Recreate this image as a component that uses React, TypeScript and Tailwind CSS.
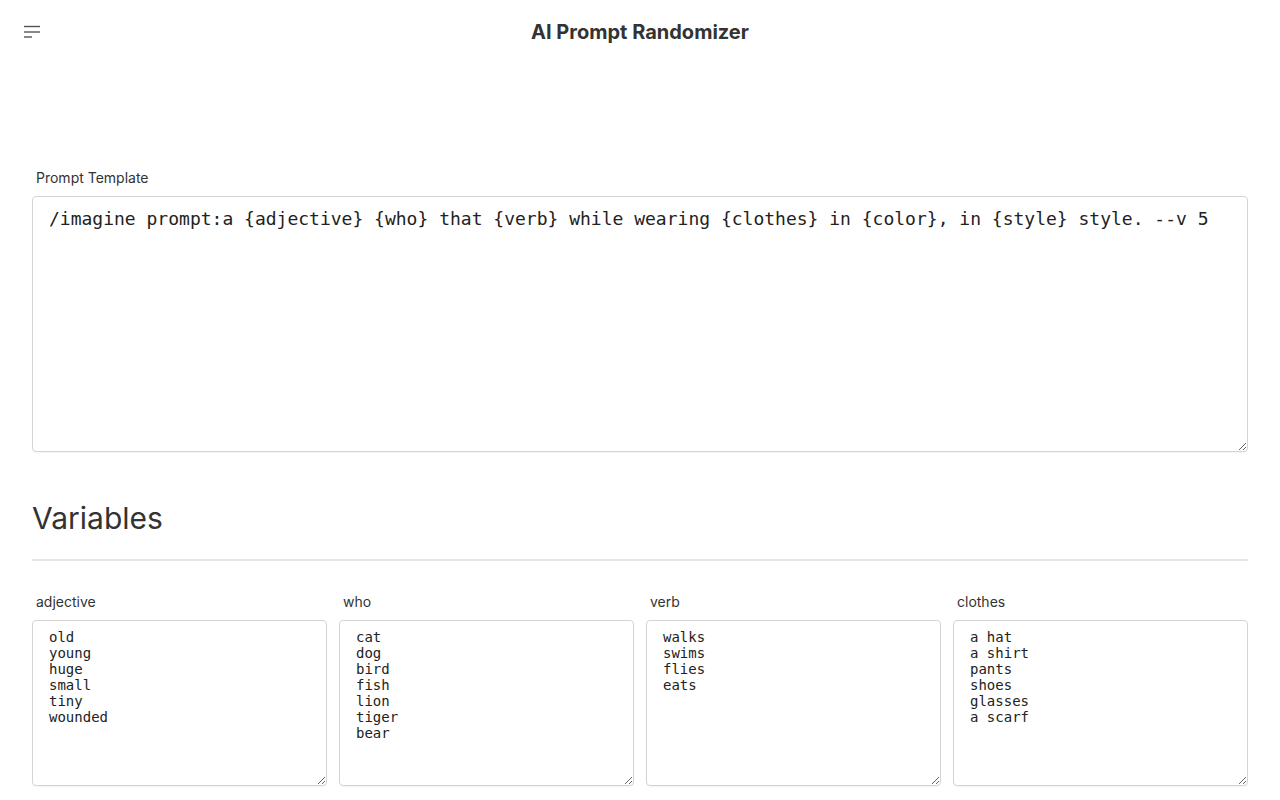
import { useState } from "react";

const mono = "font-['DejaVu_Sans_Mono',monospace]";

const initialVars: { name: string; values: string }[] = [
  { name: "adjective", values: "old\nyoung\nhuge\nsmall\ntiny\nwounded" },
  { name: "who", values: "cat\ndog\nbird\nfish\nlion\ntiger\nbear" },
  { name: "verb", values: "walks\nswims\nflies\neats" },
  { name: "clothes", values: "a hat\na shirt\npants\nshoes\nglasses\na scarf" },
];

function MenuIcon() {
  return (
    <svg width="16" height="14" viewBox="0 0 16 14" fill="none" stroke="#555" strokeWidth="1.4">
      <line x1="0" y1="1.5" x2="16" y2="1.5" />
      <line x1="0" y1="7" x2="16" y2="7" />
      <line x1="0" y1="12" x2="8" y2="12" />
    </svg>
  );
}

export default function App() {
  const [template, setTemplate] = useState(
    "/imagine prompt:a {adjective} {who} that {verb} while wearing {clothes} in {color}, in {style} style. --v 5"
  );
  const [vars, setVars] = useState(initialVars);

  return (
    <div className="min-h-screen bg-white text-[#333] font-['Inter',sans-serif]">
      {/* Top bar */}
      <header className="relative h-16 flex items-center justify-center">
        <button className="absolute left-6 top-[25px] p-0">
          <MenuIcon />
        </button>
        <h1 className="text-[20px] font-bold text-[#333]">AI Prompt Randomizer</h1>
      </header>

      <main className="px-8 pt-[104px]">
        <label className="block pl-1 text-sm leading-5 mb-2">Prompt Template</label>
        <textarea
          value={template}
          onChange={(e) => setTemplate(e.target.value)}
          className={`${mono} block w-full h-[256px] text-[18px] leading-[21px] pt-[11px] px-4 border border-[#d4d4d4] rounded outline-none text-[#222] shadow-[0_1px_1px_rgba(0,0,0,0.04)]`}
        />

        <h2 className="mt-[46px] text-[30px] leading-10 font-normal">Variables</h2>
        <hr className="mt-[21px] border-0 h-[2px] bg-[#e6e6e6]" />

        <div className="mt-[31px] grid grid-cols-4 gap-3">
          {vars.map((v, i) => (
            <div key={v.name}>
              <label className="block pl-1 text-sm leading-5 mb-2">{v.name}</label>
              <textarea
                value={v.values}
                onChange={(e) =>
                  setVars(vars.map((x, j) => (j === i ? { ...x, values: e.target.value } : x)))
                }
                className={`${mono} block w-full h-[166px] text-sm leading-4 pt-2 px-4 border border-[#d4d4d4] rounded outline-none text-[#222] shadow-[0_1px_1px_rgba(0,0,0,0.04)]`}
              />
            </div>
          ))}
        </div>
      </main>
    </div>
  );
}
